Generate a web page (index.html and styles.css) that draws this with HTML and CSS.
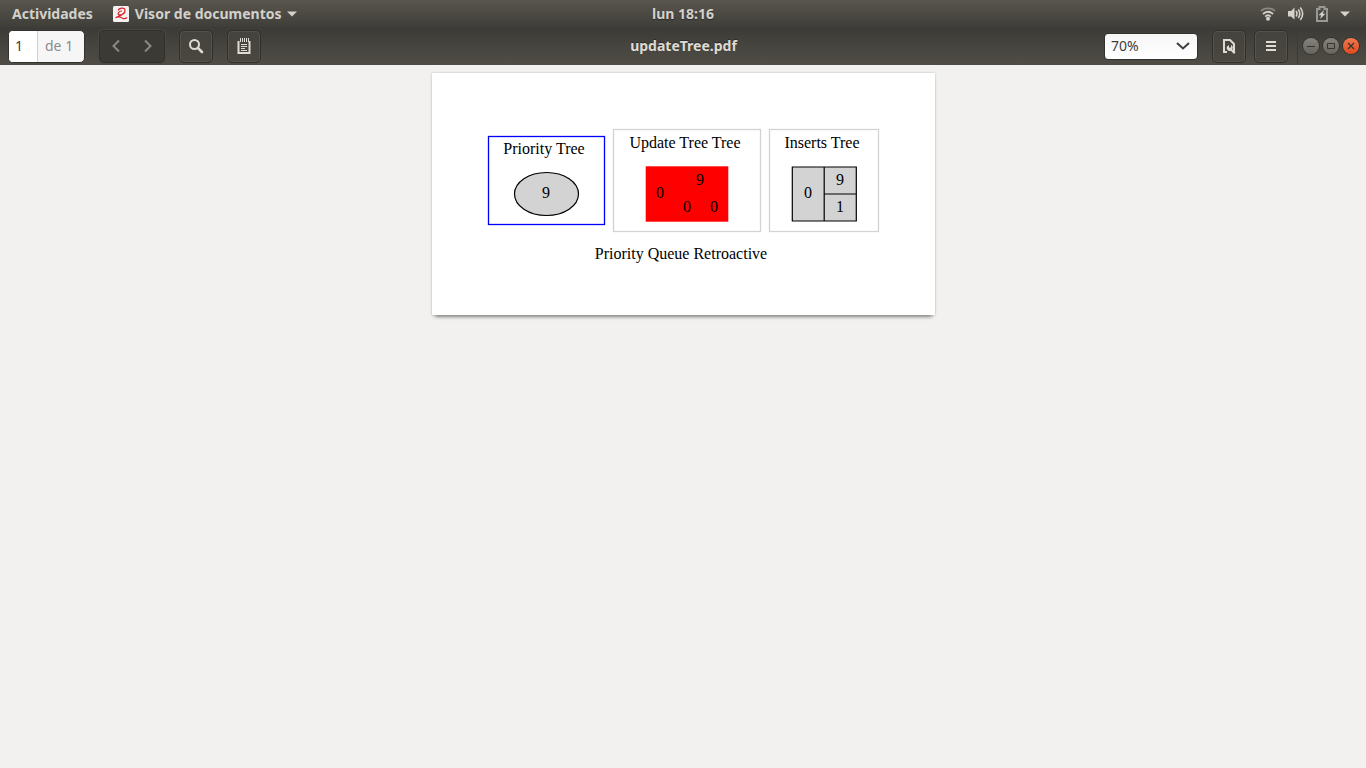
FILE: index.html
```html
<!DOCTYPE html>
<html lang="es">
<head>
<meta charset="utf-8">
<title>updateTree.pdf</title>
<link rel="stylesheet" href="styles.css">
</head>
<body>
<header class="panel">
  <nav class="panel-start">
    <button class="panel-item" type="button">Actividades</button>
    <button class="panel-item app-menu" type="button">
      <svg class="app-icon" width="16" height="16" viewBox="0 0 16 16" aria-hidden="true">
        <rect width="16" height="16" rx="1.500" fill="#f4f2f1"/>
        <path d="M5 4.500C6 2 11.500 1 12 4C12.500 7.500 8.500 9.300 6 8.800C3.800 8 6 4.800 9 5M11 7C8 10 5 10.500 2.500 11.700C5 10.500 7.500 11 9.500 12.200C11.500 13.200 13 12.500 14 11.500" fill="none" stroke="#d8202a" stroke-width="1.200"/>
      </svg>
      <span>Visor de documentos</span>
      <svg width="10" height="6" viewBox="0 0 10 6" aria-hidden="true"><path d="M0 .500h10L5 5.500z" fill="currentColor"/></svg>
    </button>
  </nav>
  <time class="clock">lun 18:16</time>
  <button class="status" type="button" aria-label="Sistema">
    <svg width="16" height="16" viewBox="0 0 16 16" aria-hidden="true">
      <g fill="none" stroke="currentColor" stroke-width="1.800">
        <path d="M1 5C4 1.500 12 1.500 15 5" opacity=".45"/>
        <path d="M3 8C6 5 10 5 13 8M5.200 10.600C7 8.900 9 8.900 10.800 10.600"/>
      </g>
      <circle cx="8" cy="12.800" r="2" fill="currentColor"/>
    </svg>
    <svg width="16" height="16" viewBox="0 0 16 16" aria-hidden="true">
      <path d="M0 5h3L6.500 1.500v12L3 10.500H0z" fill="currentColor"/>
      <path d="M8 5Q10 7.700 8 10.500M10.300 3.500Q13.300 7.700 10.300 12M12.300 1.500Q17 7.700 12.300 14" fill="none" stroke="currentColor" stroke-width="1.600"/>
    </svg>
    <svg width="12" height="16" viewBox="0 0 12 16" aria-hidden="true">
      <path d="M1 3h2.500V1h5v2H11v12H1z" fill="none" stroke="#9a9893" stroke-width="2"/>
      <path d="M8 4L2.500 9.300h2.700L4 13L9.500 7.800H6.800z" fill="currentColor"/>
    </svg>
    <svg width="10" height="6" viewBox="0 0 10 6" aria-hidden="true"><path d="M0 .500h10L5 5.500z" fill="currentColor"/></svg>
  </button>
</header>

<header class="titlebar">
  <div class="tools">
    <div class="page-entry">
      <input class="page-number" type="text" value="1" aria-label="Página">
      <span class="page-total">de 1</span>
    </div>
    <div class="history">
      <button class="history-button" type="button" aria-label="Anterior">
        <svg width="8" height="12" viewBox="0 0 8 12" aria-hidden="true"><path d="M7 .500L1.500 6L7 11.500" fill="none" stroke="currentColor" stroke-width="2"/></svg>
      </button>
      <button class="history-button" type="button" aria-label="Siguiente">
        <svg width="8" height="12" viewBox="0 0 8 12" aria-hidden="true"><path d="M1 .500L6.500 6L1 11.500" fill="none" stroke="currentColor" stroke-width="2"/></svg>
      </button>
    </div>
    <button class="tool" type="button" aria-label="Buscar">
      <svg width="16" height="16" viewBox="0 0 16 16" aria-hidden="true"><circle cx="6.500" cy="6.500" r="4.500" fill="none" stroke="currentColor" stroke-width="2"/><path d="M9.800 9.800L14 14" stroke="currentColor" stroke-width="2.600" stroke-linecap="round"/></svg>
    </button>
    <button class="tool" type="button" aria-label="Anotar">
      <svg width="16" height="16" viewBox="0 0 16 16" aria-hidden="true">
        <path d="M2.500 3v12h11V3" fill="none" stroke="currentColor" stroke-width="2"/>
        <path d="M4.500 0v4M6.500 0v4M8.500 0v4M10.500 0v4M12.500 0v4" stroke="currentColor"/>
        <path d="M5 6.500h6M5 8.500h6M5 10.500h4M5 12.500h6" stroke="currentColor"/>
      </svg>
    </button>
  </div>
  <h1 class="title">updateTree.pdf</h1>
  <div class="controls">
    <div class="zoom">
      <select class="zoom-select" aria-label="Ampliación"><option>70%</option></select>
      <svg class="zoom-arrow" width="14" height="8" viewBox="0 0 14 8" aria-hidden="true"><path d="M1 1l6 5.500L13 1" fill="none" stroke="#3d3d3d" stroke-width="2"/></svg>
    </div>
    <button class="tool" type="button" aria-label="Opciones del documento">
      <svg width="16" height="16" viewBox="0 0 16 16" aria-hidden="true">
        <path d="M6 14H3V2h6l4 4v8" fill="none" stroke="currentColor" stroke-width="2"/>
        <path d="M8 7v2.500h2V7a3 3 0 0 1 1.200 4.200L14.500 14.500 13 16 9.800 12.700A3 3 0 0 1 6 8.500z" fill="currentColor"/>
      </svg>
    </button>
    <button class="tool tool-menu" type="button" aria-label="Menú">
      <svg width="16" height="16" viewBox="0 0 16 16" aria-hidden="true"><path d="M3 4h10M3 8h10M3 12h10" stroke="currentColor" stroke-width="2"/></svg>
    </button>
    <div class="window-buttons">
      <button class="window-button" type="button" aria-label="Minimizar">
        <svg width="16" height="16" viewBox="0 0 16 16" aria-hidden="true"><path d="M4 8.500h8" stroke="currentColor"/></svg>
      </button>
      <button class="window-button" type="button" aria-label="Maximizar">
        <svg width="16" height="16" viewBox="0 0 16 16" aria-hidden="true"><path d="M4.500 5.500h7v5h-7z" fill="none" stroke="currentColor"/></svg>
      </button>
      <button class="window-button close" type="button" aria-label="Cerrar">
        <svg width="16" height="16" viewBox="0 0 16 16" aria-hidden="true"><path d="M5 5l6 6M11 5l-6 6" stroke="currentColor" stroke-width="1.300"/></svg>
      </button>
    </div>
  </div>
</header>

<main class="viewer">
  <article class="sheet">
    <svg class="diagram" width="503" height="242" viewBox="0 0 503 242" role="img" aria-label="Priority Queue Retroactive">
      <g fill="none">
        <rect x="56.500" y="63.500" width="116" height="88" stroke="#0000ff" stroke-width="1.300"/>
        <rect x="181.500" y="56.500" width="147" height="102" stroke="#d3d3d3" stroke-width="1.300"/>
        <rect x="337.500" y="56.500" width="109" height="102" stroke="#d3d3d3" stroke-width="1.300"/>
      </g>
      <ellipse cx="114.500" cy="121" rx="32" ry="21.500" fill="#d3d3d3" stroke="#000" stroke-width="1.200"/>
      <rect x="213.700" y="93.300" width="82.600" height="55.400" fill="#ff0000"/>
      <path d="M360.300 94h64v54h-64zM392.200 94v54M392.200 121h32" fill="#d3d3d3" stroke="#000" stroke-width="1.200"/>
      <g class="labels">
        <text x="112" y="81">Priority Tree</text>
        <text x="253" y="75">Update Tree Tree</text>
        <text x="390" y="75">Inserts Tree</text>
        <text x="114" y="125">9</text>
        <text x="228" y="125">0</text>
        <text x="268" y="112">9</text>
        <text x="255" y="139">0</text>
        <text x="282" y="139">0</text>
        <text x="376" y="125">0</text>
        <text x="408" y="112">9</text>
        <text x="408" y="139">1</text>
        <text x="249" y="186">Priority Queue Retroactive</text>
      </g>
    </svg>
  </article>
</main>
</body>
</html>
```
FILE: styles.css
```css
* { box-sizing: border-box; }

body {
  margin: 0;
  min-height: 100vh;
  display: flex;
  flex-direction: column;
  background: #f2f1f0;
  font-family: "Noto Sans", "Open Sans", sans-serif;
  font-size: 14px;
}

button {
  margin: 0;
  padding: 0;
  border: 0;
  background: none;
  color: inherit;
  font: inherit;
}

svg { display: block; flex: none; }

.panel, .titlebar {
  display: grid;
  grid-template-columns: 1fr auto 1fr;
  align-items: center;
}

.panel {
  height: 27px;
  padding: 0 12px;
  background: linear-gradient(#59564e, #3f3e39);
  color: #d3d1cb;
  font-weight: 700;
  line-height: 26px;
  text-shadow: 0 1px 1px #2b2a27;
}

.panel-start, .app-menu, .status, .tools, .controls, .window-buttons {
  display: flex;
  align-items: center;
}

.panel-start { gap: 20px; }
.app-menu { gap: 5px; }
.app-icon { margin-right: 1px; }

.status {
  justify-self: end;
  gap: 12px;
  margin-right: 4px;
}

.titlebar {
  height: 38px;
  padding: 0 7px 0 8px;
  background: linear-gradient(#3c3b37, #504d46);
  color: #dfdbd2;
}

.title {
  margin: 0;
  padding-bottom: 2px;
  font-size: 14px;
  font-weight: 700;
  text-shadow: 0 -1px 0 #2b2a27;
}

.tools { gap: 14px; }

.page-entry {
  display: flex;
  height: 33px;
  width: 77px;
  border: 1px solid #33322e;
  border-radius: 5px;
  background: #f6f6f6;
  overflow: hidden;
}

.page-number {
  width: 29px;
  padding: 0 6px 2px;
  border: 0;
  border-right: 1px solid #cfcfcf;
  background: #fff;
  color: #3c3c3c;
  font: inherit;
}

.page-total {
  padding: 0 7px;
  color: #8b8b8b;
  line-height: 29px;
  white-space: nowrap;
}

.history {
  display: flex;
  width: 66px;
  height: 33px;
  border: 1px solid #302f2b;
  border-radius: 5px;
  background: #3b3a35;
  box-shadow: 0 0 0 1px #4a4842;
  color: #8d8a82;
}

.history-button {
  flex: 1;
  display: grid;
  place-items: center;
}

.tool {
  width: 34px;
  height: 33px;
  display: grid;
  place-items: center;
  border: 1px solid #302f2b;
  border-radius: 5px;
  background: linear-gradient(#45433d, #494740);
  box-shadow: inset 0 0 0 1px #55534b;
}

.controls { justify-self: end; }
.tool-menu { margin-left: 8px; }

.zoom {
  display: grid;
  align-items: center;
  margin-right: 14px;
}

.zoom-select {
  grid-area: 1 / 1;
  width: 94px;
  height: 27px;
  padding: 0 6px 2px;
  border: 1px solid #33322e;
  border-radius: 4px;
  background: linear-gradient(#f6f6f6, #fff);
  color: #3c3c3c;
  font: inherit;
  appearance: none;
}

.zoom-arrow {
  grid-area: 1 / 1;
  justify-self: end;
  margin-right: 8px;
  pointer-events: none;
}

.window-buttons {
  height: 36px;
  gap: 4px;
  margin-left: 9px;
  padding-left: 5px;
  border-left: 1px solid #3b3a35;
}

.window-button {
  width: 16px;
  height: 16px;
  border-radius: 50%;
  background: linear-gradient(#85837b, #66645d);
  box-shadow: 0 0 0 1px #353430;
  color: #35342f;
}

.close { background: linear-gradient(#f4784f, #dd4c1b); }

.viewer {
  flex: 1;
  display: flex;
  justify-content: center;
  align-items: flex-start;
  padding: 8px;
}

.sheet {
  background: #fff;
  box-shadow: 0 0 2px #b9b9b7, 0 4px 4px -3px #444;
}

.labels {
  fill: #000;
  font-family: "Liberation Serif", serif;
  font-size: 16px;
  text-anchor: middle;
}
```
